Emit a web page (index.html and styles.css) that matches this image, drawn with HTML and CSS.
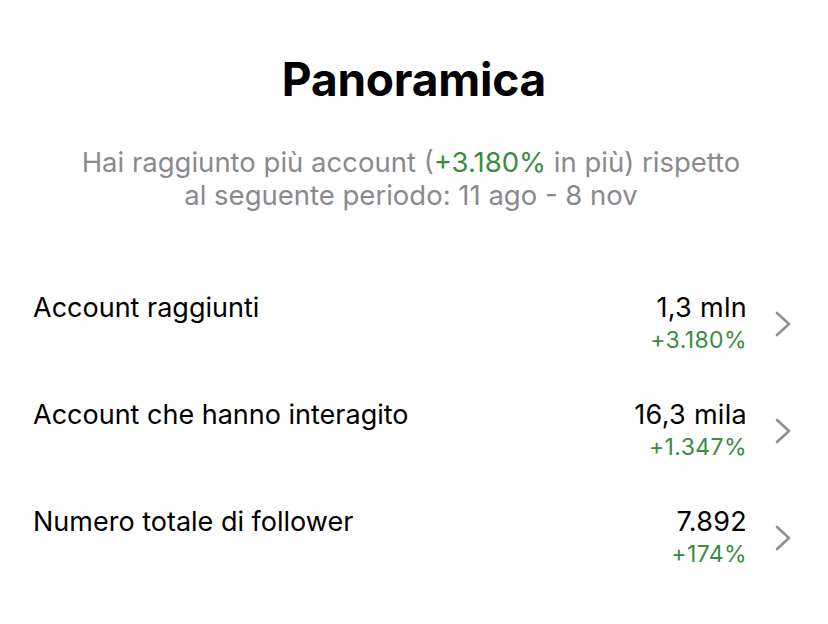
FILE: index.html
```html
<!DOCTYPE html>
<html lang="it">
<head>
<meta charset="utf-8">
<link rel="stylesheet" href="styles.css">
</head>
<body>
<main class="page">
  <h1 class="title">Panoramica</h1>
  <p class="subtitle">Hai raggiunto più account (<span class="green">+3.180%</span> in più) rispetto<br>al seguente periodo: 11 ago - 8 nov</p>
  <ul class="list">
    <li class="row">
      <span class="label">Account raggiunti</span>
      <span class="values"><span class="value">1,3 mln</span><span class="delta">+3.180%</span></span>
      <svg class="chev" width="16" height="26" viewBox="0 0 16 26"><path d="M2 2 L14 13 L2 24" fill="none" stroke="#8e8e93" stroke-width="2.6" stroke-linecap="round" stroke-linejoin="round"/></svg>
    </li>
    <li class="row">
      <span class="label">Account che hanno interagito</span>
      <span class="values"><span class="value">16,3 mila</span><span class="delta">+1.347%</span></span>
      <svg class="chev" width="16" height="26" viewBox="0 0 16 26"><path d="M2 2 L14 13 L2 24" fill="none" stroke="#8e8e93" stroke-width="2.6" stroke-linecap="round" stroke-linejoin="round"/></svg>
    </li>
    <li class="row">
      <span class="label">Numero totale di follower</span>
      <span class="values"><span class="value">7.892</span><span class="delta">+174%</span></span>
      <svg class="chev" width="16" height="26" viewBox="0 0 16 26"><path d="M2 2 L14 13 L2 24" fill="none" stroke="#8e8e93" stroke-width="2.6" stroke-linecap="round" stroke-linejoin="round"/></svg>
    </li>
  </ul>
</main>
</body>
</html>
```
FILE: styles.css
```css
html, body {
  margin: 0;
  padding: 0;
  background: #ffffff;
}
body {
  font-family: Inter, "Noto Sans", sans-serif;
  color: #000000;
}
.page {
  width: 828px;
  height: 624px;
  box-sizing: border-box;
  padding-top: 52px;
}
.title {
  margin: 0;
  text-align: center;
  font-size: 46px;
  font-weight: 700;
  line-height: 54px;
  letter-spacing: -0.2px;
}
.subtitle {
  margin: 40px 0 0;
  padding-right: 6px;
  text-align: center;
  font-size: 27.5px;
  line-height: 33px;
  color: #8a8a8e;
}
.green {
  color: #3a8c3f;
}
.list {
  list-style: none;
  margin: 80px 0 0;
  padding: 0 37px 0 33px;
}
.row {
  display: flex;
  align-items: flex-start;
  height: 107px;
}
.label {
  flex: 1;
  font-size: 27px;
  line-height: 32px;
}
.values {
  display: flex;
  flex-direction: column;
  align-items: flex-end;
}
.value {
  font-size: 27px;
  line-height: 32px;
  letter-spacing: 0.3px;
}
.delta {
  margin-top: 3px;
  font-size: 23px;
  line-height: 26px;
  letter-spacing: 0.4px;
  color: #3a8c3f;
}
.chev {
  margin: 19px 0 0 28px;
}
```
